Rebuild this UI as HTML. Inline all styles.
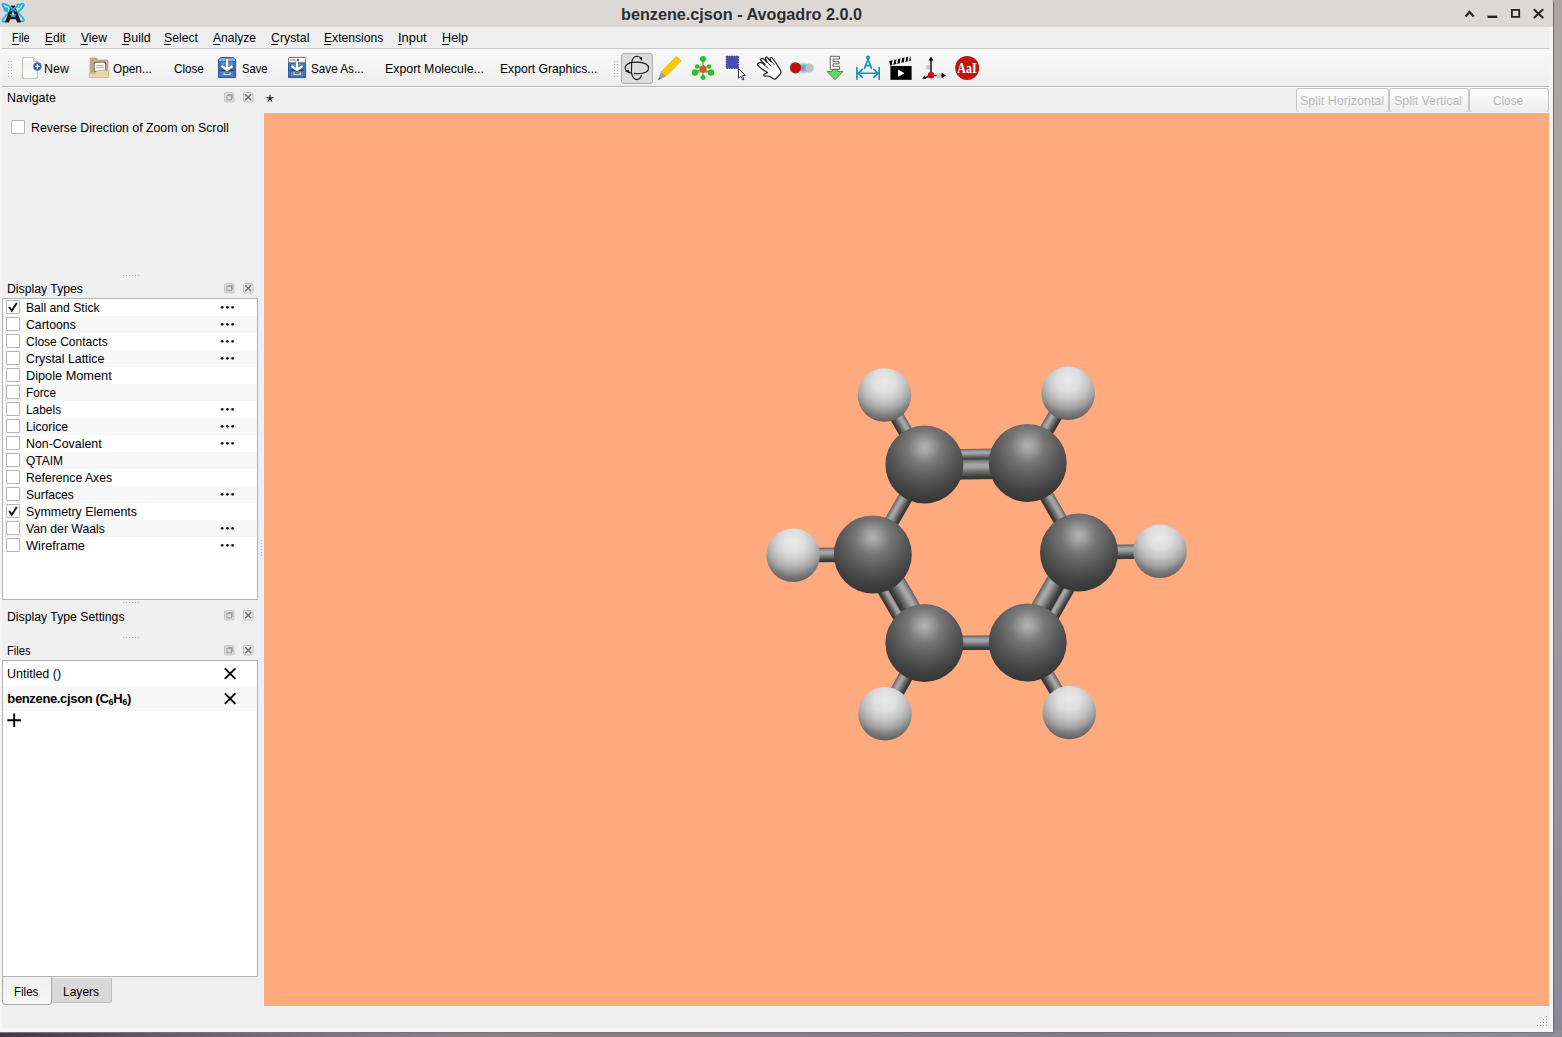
<!DOCTYPE html><html><head><meta charset="utf-8"><title>Avogadro</title><style>
*{margin:0;padding:0;box-sizing:border-box}
html,body{width:1562px;height:1037px;overflow:hidden}
body{position:relative;font-family:"Liberation Sans",sans-serif;color:#000;
 background:linear-gradient(180deg,#aca7a4 0%,#a7a2a6 40%,#9894a0 70%,#8a8798 100%)}
.a{position:absolute}
.t{position:absolute;white-space:pre}
svg{position:absolute;overflow:visible}
</style></head><body><div class="a" style="left:0;top:1031px;width:1562px;height:6px;background:linear-gradient(90deg,#3f3745 0%,#4d4553 4%,#645a68 10%,#7a7280 20%,#8a8088 30%,#857d85 50%,#7f7a84 70%,#8a8894 85%,#8e8c98 100%)"></div>
<div class="a" style="left:0;top:0;width:1554px;height:1033px;background:#f6f5f3;border-right:1px solid #6e6e6e;border-bottom:1px solid #77747a;border-top-right-radius:2px"></div>
<div class="a" style="left:0;top:0;width:1553px;height:27px;background:#dcd8d5;border-top-right-radius:2px"></div>
<div class="a" style="left:2px;top:27px;width:1547px;height:1001px;background:#efefef"></div>
<div class="a" style="left:2px;top:48px;width:1547px;height:1px;background:#c9c9c9"></div>
<div class="a" style="left:2px;top:49px;width:1547px;height:37px;background:linear-gradient(180deg,#f8f8f8 0%,#f3f3f3 60%,#ededed 100%)"></div>
<div class="a" style="left:2px;top:86px;width:1547px;height:1px;background:#b9b9b9"></div>
<div class="a" style="left:2px;top:87px;width:1547px;height:1px;background:#f7f7f7"></div>
<div class="t" style="left:620.60px;top:6px;font-size:16px;line-height:17.000px;transform:scaleX(1.0126);transform-origin:0.00px 0;font-weight:bold;color:#2b2f33;">benzene.cjson - Avogadro 2.0.0</div>
<svg style="left:1460px;top:5px" width="90" height="18" viewBox="1460 5 90 18">
<path d="M1465.5 16.5 L1469.6 12 L1473.7 16.5" fill="none" stroke="#232627" stroke-width="2.2"/>
<rect x="1487.5" y="15.6" width="9.8" height="2.4" fill="#232627"/>
<rect x="1511.9" y="9.9" width="7.3" height="7" fill="none" stroke="#232627" stroke-width="1.8"/>
<path d="M1534.4 9.8 L1542.6 17.6 M1542.6 9.8 L1534.4 17.6" stroke="#232627" stroke-width="2.1" stroke-linecap="round"/>
</svg>
<svg style="left:0px;top:0px" width="28" height="27" viewBox="0 0 28 27">
<defs><clipPath id="lgc"><rect x="0" y="0" width="28" height="11.5"/><rect x="10" y="14" width="6" height="3"/></clipPath></defs>
<ellipse cx="13.2" cy="12.6" rx="13.6" ry="2.9" transform="rotate(38.5 13.2 12.6)" fill="none" stroke="#1ab4ea" stroke-width="1.5"/><ellipse cx="13.1" cy="12.8" rx="13.6" ry="2.9" transform="rotate(-39.5 13.1 12.8)" fill="none" stroke="#1ab4ea" stroke-width="1.5"/>
<path fill-rule="evenodd" d="M4.8 22.6 L11.2 5.6 L14.8 5.6 L21.2 22.6 L17 22.6 L15.9 19.3 L10.1 19.3 L9 22.6 Z M11.1 16.4 L14.9 16.4 L13 10.6 Z" fill="#231f20"/>
<g clip-path="url(#lgc)"><ellipse cx="13.2" cy="12.6" rx="13.6" ry="2.9" transform="rotate(38.5 13.2 12.6)" fill="none" stroke="#1ab4ea" stroke-width="1.5"/><ellipse cx="13.1" cy="12.8" rx="13.6" ry="2.9" transform="rotate(-39.5 13.1 12.8)" fill="none" stroke="#1ab4ea" stroke-width="1.5"/></g>
<circle cx="6" cy="9.6" r="2.4" fill="#1ab4ea"/>
<circle cx="18.5" cy="5.6" r="2.2" fill="#1ab4ea"/>
<circle cx="18.6" cy="5.6" r="0.9" fill="#a5e3f8"/>
</svg>
<div class="t" style="left:12.30px;top:30px;font-size:13.5px;line-height:15.000px;transform:scaleX(0.8131);transform-origin:0.00px 0;">File</div>
<div class="a" style="left:11.8px;top:44px;width:7px;height:1px;background:#111"></div>
<div class="t" style="left:45.30px;top:30px;font-size:13.5px;line-height:15.000px;transform:scaleX(0.8902);transform-origin:0.00px 0;">Edit</div>
<div class="a" style="left:44.8px;top:44px;width:7px;height:1px;background:#111"></div>
<div class="t" style="left:81.00px;top:30px;font-size:13.5px;line-height:15.000px;transform:scaleX(0.8947);transform-origin:0.00px 0;">View</div>
<div class="a" style="left:80.5px;top:44px;width:7px;height:1px;background:#111"></div>
<div class="t" style="left:122.50px;top:30px;font-size:13.5px;line-height:15.000px;transform:scaleX(0.9166);transform-origin:0.00px 0;">Build</div>
<div class="a" style="left:122.0px;top:44px;width:7px;height:1px;background:#111"></div>
<div class="t" style="left:164.00px;top:30px;font-size:13.5px;line-height:15.000px;transform:scaleX(0.9059);transform-origin:0.00px 0;">Select</div>
<div class="a" style="left:163.5px;top:44px;width:7px;height:1px;background:#111"></div>
<div class="t" style="left:213.00px;top:30px;font-size:13.5px;line-height:15.000px;transform:scaleX(0.8953);transform-origin:0.00px 0;">Analyze</div>
<div class="a" style="left:212.5px;top:44px;width:7px;height:1px;background:#111"></div>
<div class="t" style="left:271.20px;top:30px;font-size:13.5px;line-height:15.000px;transform:scaleX(0.9139);transform-origin:0.00px 0;">Crystal</div>
<div class="a" style="left:270.7px;top:44px;width:7px;height:1px;background:#111"></div>
<div class="t" style="left:324.00px;top:30px;font-size:13.5px;line-height:15.000px;transform:scaleX(0.8993);transform-origin:0.00px 0;">Extensions</div>
<div class="a" style="left:323.5px;top:44px;width:7px;height:1px;background:#111"></div>
<div class="t" style="left:398.30px;top:30px;font-size:13.5px;line-height:15.000px;transform:scaleX(0.9555);transform-origin:0.00px 0;">Input</div>
<div class="a" style="left:397.8px;top:44px;width:4px;height:1px;background:#111"></div>
<div class="t" style="left:442.00px;top:30px;font-size:13.5px;line-height:15.000px;transform:scaleX(0.9361);transform-origin:0.00px 0;">Help</div>
<div class="a" style="left:441.5px;top:44px;width:7px;height:1px;background:#111"></div>
<div class="a" style="left:8px;top:61px;width:1px;height:1px;background:#b5b5b5"></div><div class="a" style="left:11px;top:61px;width:1px;height:1px;background:#b5b5b5"></div><div class="a" style="left:8px;top:64px;width:1px;height:1px;background:#b5b5b5"></div><div class="a" style="left:11px;top:64px;width:1px;height:1px;background:#b5b5b5"></div><div class="a" style="left:8px;top:67px;width:1px;height:1px;background:#b5b5b5"></div><div class="a" style="left:11px;top:67px;width:1px;height:1px;background:#b5b5b5"></div><div class="a" style="left:8px;top:70px;width:1px;height:1px;background:#b5b5b5"></div><div class="a" style="left:11px;top:70px;width:1px;height:1px;background:#b5b5b5"></div><div class="a" style="left:8px;top:73px;width:1px;height:1px;background:#b5b5b5"></div><div class="a" style="left:11px;top:73px;width:1px;height:1px;background:#b5b5b5"></div><div class="a" style="left:8px;top:76px;width:1px;height:1px;background:#b5b5b5"></div><div class="a" style="left:11px;top:76px;width:1px;height:1px;background:#b5b5b5"></div>
<div class="a" style="left:614px;top:61px;width:1px;height:1px;background:#b5b5b5"></div><div class="a" style="left:617px;top:61px;width:1px;height:1px;background:#b5b5b5"></div><div class="a" style="left:614px;top:64px;width:1px;height:1px;background:#b5b5b5"></div><div class="a" style="left:617px;top:64px;width:1px;height:1px;background:#b5b5b5"></div><div class="a" style="left:614px;top:67px;width:1px;height:1px;background:#b5b5b5"></div><div class="a" style="left:617px;top:67px;width:1px;height:1px;background:#b5b5b5"></div><div class="a" style="left:614px;top:70px;width:1px;height:1px;background:#b5b5b5"></div><div class="a" style="left:617px;top:70px;width:1px;height:1px;background:#b5b5b5"></div><div class="a" style="left:614px;top:73px;width:1px;height:1px;background:#b5b5b5"></div><div class="a" style="left:617px;top:73px;width:1px;height:1px;background:#b5b5b5"></div><div class="a" style="left:614px;top:76px;width:1px;height:1px;background:#b5b5b5"></div><div class="a" style="left:617px;top:76px;width:1px;height:1px;background:#b5b5b5"></div>
<svg style="left:20px;top:55px" width="22" height="26" viewBox="20 55 22 26">
<defs><linearGradient id="pg" x1="0" y1="0" x2="0" y2="1"><stop offset="0" stop-color="#ffffff"/><stop offset="0.3" stop-color="#f4f4f0"/><stop offset="1" stop-color="#ffffff"/></linearGradient></defs>
<path d="M22.6 57.6 L33.6 57.6 L37.3 61.3 L37.3 78.3 L22.6 78.3 Z" fill="url(#pg)" stroke="#c2c2b8" stroke-width="1"/>
<path d="M33.4 57.8 L33.4 61.5 L37.1 61.5" fill="#e8e8e4" stroke="#b8b8ae" stroke-width="0.8"/>
<circle cx="37.4" cy="66.4" r="4" fill="#2859a8" stroke="#5a86c6" stroke-width="0.7"/>
<path d="M37.4 64 V68.8 M35 66.4 H39.8" stroke="#fff" stroke-width="1.3"/>
</svg>
<div class="t" style="left:44.20px;top:61px;font-size:13.5px;line-height:15.000px;transform:scaleX(0.9211);transform-origin:0.00px 0;">New</div>
<svg style="left:86px;top:55px" width="26" height="26" viewBox="86 55 26 26">
<path d="M90 59.2 Q90 58 91.2 58 L96.6 58 L98.2 60 L106.8 60 Q108 60 108 61.2 L108 74 L90 74 Z" fill="#c4ab82" stroke="#b49a6e" stroke-width="0.6"/>
<rect x="94.2" y="62.2" width="11.4" height="9.4" fill="#ffffff" stroke="#6e6e6e" stroke-width="1"/>
<path d="M96.2 65.4 H103.6 M96.2 67.5 H103.6" stroke="#9aa09a" stroke-width="0.9"/>
<path d="M89.3 73.2 L95.4 73.2 L97 70.3 L108.6 70.3 L108.6 76.6 Q108.6 77.6 107.6 77.6 L90.3 77.6 Q89.3 77.6 89.3 76.6 Z" fill="#e8d4b0" stroke="#c9ad7e" stroke-width="0.8"/>
</svg>
<div class="t" style="left:113.30px;top:61px;font-size:13.5px;line-height:15.000px;transform:scaleX(0.8762);transform-origin:0.00px 0;">Open...</div>
<div class="t" style="left:173.50px;top:61px;font-size:13.5px;line-height:15.000px;transform:scaleX(0.8631);transform-origin:0.00px 0;">Close</div>
<svg style="left:215.9px;top:55px" width="24" height="26" viewBox="215.9 55 24 26">
<path d="M218.4 59.6 L220.5 57.5 L233.4 57.5 L235.5 59.6 L235.5 77.6 L218.4 77.6 Z" fill="#3f73c4" stroke="#2a5aa6" stroke-width="1"/><rect x="219.1" y="58.2" width="15.7" height="2.8" fill="#8db1e4"/>
<rect x="220.3" y="61.6" width="13.3" height="8.399999999999999" fill="#5a8bd6" stroke="#3a68b5" stroke-width="0.7"/>
<rect x="220.3" y="71.2" width="13.3" height="5.6" fill="#5a8bd6" stroke="#3a68b5" stroke-width="0.7"/>
<rect x="220.5" y="69.4" width="12.9" height="1.4" fill="#2b3850"/>
<path d="M226.95000000000002 60 V68.6 M222.20000000000002 66.6 L226.95000000000002 69.9 L231.70000000000002 66.6" fill="none" stroke="#3a3a3a" stroke-width="3.4" stroke-linecap="round" stroke-linejoin="round" opacity="0.55"/>
<path d="M226.95000000000002 60 V68.6 M222.20000000000002 66.6 L226.95000000000002 69.9 L231.70000000000002 66.6" fill="none" stroke="#fff" stroke-width="2.4" stroke-linecap="round" stroke-linejoin="round"/>
<path d="M223.9 72.3 V74.8 H230.0 V72.3" fill="none" stroke="#444" stroke-width="2.2" stroke-linejoin="round"/>
<path d="M223.9 72.3 V74.8 H230.0 V72.3" fill="none" stroke="#fff" stroke-width="1.1"/>
</svg>
<div class="t" style="left:241.50px;top:61px;font-size:13.5px;line-height:15.000px;transform:scaleX(0.8285);transform-origin:0.00px 0;">Save</div>
<svg style="left:286.3px;top:55px" width="24" height="26" viewBox="286.3 55 24 26">
<path d="M288.8 62.5 L305.90000000000003 62.5 L305.90000000000003 77.6 L288.8 77.6 Z" fill="#3f73c4" stroke="#2a5aa6" stroke-width="1"/><rect x="288.90000000000003" y="57.4" width="17" height="5.4" rx="1.2" fill="#fff" stroke="#6a6a6a" stroke-width="1"/><rect x="290.5" y="59.2" width="5.6" height="1.7" fill="#b4b4b4"/><rect x="297.6" y="58.8" width="1.3" height="2.3" fill="#111"/>
<rect x="290.7" y="63.4" width="13.3" height="6.6" fill="#5a8bd6" stroke="#3a68b5" stroke-width="0.7"/>
<rect x="290.7" y="71.2" width="13.3" height="5.6" fill="#5a8bd6" stroke="#3a68b5" stroke-width="0.7"/>
<rect x="290.90000000000003" y="69.4" width="12.9" height="1.4" fill="#2b3850"/>
<path d="M297.35 62.3 V68.6 M292.6 66.6 L297.35 69.9 L302.1 66.6" fill="none" stroke="#3a3a3a" stroke-width="3.4" stroke-linecap="round" stroke-linejoin="round" opacity="0.55"/>
<path d="M297.35 62.3 V68.6 M292.6 66.6 L297.35 69.9 L302.1 66.6" fill="none" stroke="#fff" stroke-width="2.4" stroke-linecap="round" stroke-linejoin="round"/>
<path d="M294.3 72.3 V74.8 H300.40000000000003 V72.3" fill="none" stroke="#444" stroke-width="2.2" stroke-linejoin="round"/>
<path d="M294.3 72.3 V74.8 H300.40000000000003 V72.3" fill="none" stroke="#fff" stroke-width="1.1"/>
</svg>
<div class="t" style="left:311.30px;top:61px;font-size:13.5px;line-height:15.000px;transform:scaleX(0.8670);transform-origin:0.00px 0;">Save As...</div>
<div class="t" style="left:385.40px;top:61px;font-size:13.5px;line-height:15.000px;transform:scaleX(0.9145);transform-origin:0.00px 0;">Export Molecule...</div>
<div class="t" style="left:499.60px;top:61px;font-size:13.5px;line-height:15.000px;transform:scaleX(0.9016);transform-origin:0.00px 0;">Export Graphics...</div>
<div class="a" style="left:621px;top:53px;width:32px;height:31px;background:#dcdcdc;border:1px solid #acacac;border-radius:3px"></div>
<svg style="left:621px;top:53px" width="32" height="31" viewBox="621 53 32 31">
<path d="M631.6 62.4 C633.5 62.1 635.5 62.1 637.5 62.1 C644 62.1 648.6 64.8 648.6 68 C648.6 71.3 644.5 73.6 638 73.7 C636.6 73.7 635.2 73.6 634 73.4 M631.3 73.1 C627.8 72.2 625.2 70.3 625.2 68 C625.2 65.6 627.6 63.5 631.6 62.4" fill="none" stroke="#1a1a1a" stroke-width="1.15"/>
<path d="M641 58.6 C640 56.8 638.6 56.2 637 56.2 C634.2 56.3 632.2 59.5 631.6 62.4 L631.5 73.2 C632.2 76.6 634.2 79.6 637 79.6 C639 79.6 640.6 77.6 641.6 75.3" fill="none" stroke="#1a1a1a" stroke-width="1.15"/>
<path d="M639.3 58.2 L642.2 56.8 L642 60.8 Z" fill="#000"/>
<path d="M625.2 71.3 L628.8 69.6 L629.8 73.2 Z" fill="#000"/>
</svg>
<svg style="left:656px;top:54px" width="28" height="28" viewBox="656 54 28 28">
<path d="M676.6 56.2 L681.4 61 L665.8 76.6 L661 71.8 Z" fill="#f6c800" stroke="#e0b000" stroke-width="0.5"/>
<path d="M661 71.8 L665.8 76.6 L658.2 80 Z" fill="#9d9d9d"/>
<path d="M658.2 80 L659.4 77.4 L660.8 78.8 Z" fill="#555"/>
</svg>
<svg style="left:689px;top:54px" width="28" height="28" viewBox="689 54 28 28">
<path d="M703 59 V78 M695 72 L711 72 M697 66 L709 72 M709 66 L695 72" stroke="#7a8a30" stroke-width="1.2"/>
<circle cx="703" cy="59" r="3" fill="#22c61e"/>
<circle cx="703" cy="77.5" r="2.5" fill="#22c61e"/>
<circle cx="695" cy="72.5" r="3.2" fill="#22c61e"/>
<circle cx="711" cy="72.5" r="3.2" fill="#22c61e"/>
<circle cx="697" cy="66.5" r="2.2" fill="#22c61e"/>
<circle cx="709" cy="66.5" r="2.2" fill="#22c61e"/>
<circle cx="703" cy="69" r="3.6" fill="#de5a26"/>
</svg>
<svg style="left:723px;top:54px" width="26" height="28" viewBox="723 54 26 28">
<rect x="726.3" y="56.2" width="12.2" height="12.2" fill="#4b4bb9" stroke="#222" stroke-width="0.8" stroke-dasharray="1.5 1"/>
<path d="M738.5 68.5 L738.5 78.2 L740.8 76.2 L742.6 80 L744 79.3 L742.3 75.6 L745.4 75.4 Z" fill="#fff" stroke="#222" stroke-width="0.9" stroke-linejoin="round"/>
</svg>
<svg style="left:754px;top:54px" width="30" height="28" viewBox="754 54 30 28">
<path d="M758 63.5 C760 62 763 63 765 64.5 L761 60.5 C760 59 761.5 57.8 763 58.6 L767 62 L765.5 58.8 C765 57.3 766.6 56.6 767.6 57.6 L771 61.8 L770.3 59 C770 57.6 771.6 57.2 772.4 58.2 L775.6 62.5 C777 64.5 778.8 67.5 780.6 70.5 C781.6 72 780.8 73.5 779.8 74.6 L776.6 78 C775.6 79 774 79.2 773 78.6 L770 76.6 C768.5 75.6 767 76 765.5 76.2 C763.8 76.5 763.2 74.8 764.5 74 L767.5 72.6 L762 69 C760.3 67.8 758.6 66.3 757.6 65 C757.2 64.4 757.4 63.9 758 63.5 Z" fill="#fff" stroke="#1a1a1a" stroke-width="1.2" stroke-linejoin="round"/>
<path d="M763 64 L768.5 68.5 M766.5 61.5 L771.5 66.5 M770.5 60.5 L774.5 65" fill="none" stroke="#1a1a1a" stroke-width="0.9"/>
</svg>
<svg style="left:786px;top:58px" width="30" height="20" viewBox="786 58 30 20">
<defs><radialGradient id="glw" cx="0.5" cy="0.5" r="0.5"><stop offset="0" stop-color="#2a9cc8" stop-opacity="1"/><stop offset="0.45" stop-color="#4ab8dc" stop-opacity="0.8"/><stop offset="1" stop-color="#bfe8f6" stop-opacity="0"/></radialGradient></defs>
<ellipse cx="803.5" cy="68" rx="12.5" ry="6.8" fill="url(#glw)"/>
<path d="M797 68 H809" stroke="#f07272" stroke-width="2"/>
<circle cx="809.7" cy="68" r="4.2" fill="#c2c2c2"/>
<circle cx="795.5" cy="67.8" r="5.6" fill="#bf1111"/>
</svg>
<svg style="left:824px;top:54px" width="22" height="28" viewBox="824 54 22 28">
<path d="M830.3 56.3 H839.5 V59 H833 V61.5 H839 V63.8 H833 V66.3 H839.6 V69.4 H830.3 Z" fill="#f6f6f6" stroke="#595959" stroke-width="0.9" stroke-linejoin="round"/>
<path d="M832.4 69.4 H837.6 V71.5 H843 L835 79.8 L827 71.5 H832.4 Z" fill="#62d762" stroke="#3d6b3d" stroke-width="0.7"/>
</svg>
<svg style="left:853px;top:54px" width="30" height="28" viewBox="853 54 30 28">
<g stroke="#1590b8" stroke-width="1.6" fill="none" stroke-linecap="round">
<path d="M856.9 67.6 V79.2 M879.2 67.6 V79.2"/>
<path d="M857.6 73.3 H878.4"/>
<path d="M862.4 69.4 L858.2 73.3 L862.4 77.3 M873.8 69.4 L878 73.3 L873.8 77.3"/>
<path d="M864.5 68.4 L868 59.3 L871.5 68.4 M865.6 65.6 H870.4"/>
<circle cx="868" cy="57.6" r="1.3"/>
</g></svg>
<svg style="left:886px;top:54px" width="28" height="28" viewBox="886 54 28 28">
<rect x="890.4" y="66" width="21.2" height="13.8" fill="#000"/>
<path d="M898 69.6 V76.8 L904.6 73.2 Z" fill="#fff"/>
<path d="M889.2 61 L910.2 56.2 L911.2 60.6 L890.2 65.4 Z" fill="#000"/>
<path d="M892.5 64.6 L893.5 59.8 M896.5 63.7 L897.5 58.9 M900.5 62.8 L901.5 58 M904.5 61.9 L905.5 57.1 M908.3 61 L909.3 56.2" stroke="#fff" stroke-width="1.6"/>
</svg>
<svg style="left:918px;top:54px" width="30" height="28" viewBox="918 54 30 28">
<circle cx="928.3" cy="67.2" r="2.5" fill="#cdcdcd"/>
<path d="M931 75 V59" stroke="#000" stroke-width="1.4"/>
<path d="M931 56.6 L933.4 60.6 L928.6 60.6 Z" fill="#000"/>
<path d="M931 75.5 L924.5 77.8 M931 75.5 L942 75.5" stroke="#000" stroke-width="1.4"/>
<circle cx="939" cy="75.5" r="2.6" fill="#c8c8c8"/>
<path d="M922.2 78.8 L924.6 75.2 L926.2 79 Z M946 75.5 L941.6 72.8 L941.6 78.2 Z" fill="#000"/>
<circle cx="931" cy="75.2" r="3.3" fill="#c21111"/>
</svg>
<svg style="left:953px;top:54px" width="28" height="28" viewBox="953 54 28 28">
<circle cx="967.2" cy="68" r="12" fill="#c11414"/>
<text x="957.3" y="72.8" font-family="Liberation Serif" font-weight="bold" font-size="13.6" fill="#fff" textLength="19.3" lengthAdjust="spacingAndGlyphs">AaI</text>
</svg>
<div class="t" style="left:6.50px;top:90px;font-size:13.5px;line-height:15.000px;transform:scaleX(0.9157);transform-origin:0.00px 0;">Navigate</div>
<svg style="left:222px;top:90px" width="34" height="14" viewBox="222 90 34 14">
<rect x="224.5" y="92.5" width="9.5" height="9.5" rx="1.5" fill="#dcdcdc" stroke="#c6c6c6" stroke-width="1"/>
<rect x="227" y="95.3" width="4.5" height="4.5" fill="none" stroke="#9a9a9a" stroke-width="1"/>
<path d="M228 94.6 H232.3 V98.8" fill="none" stroke="#9a9a9a" stroke-width="0.9"/>
<rect x="243.5" y="92.5" width="9.5" height="9.5" rx="1.5" fill="#e6e6e6" stroke="#c6c6c6" stroke-width="1"/>
<path d="M245.2 94.2 L251.2 100.3 M251.2 94.2 L245.2 100.3" stroke="#6a6a6a" stroke-width="1.25"/>
</svg>
<div class="a" style="left:11px;top:120px;width:14px;height:14px;background:#fff;border:1px solid #b5b5b5;border-radius:1px"></div>
<div class="t" style="left:30.60px;top:120px;font-size:13.5px;line-height:15.000px;transform:scaleX(0.9122);transform-origin:0.00px 0;">Reverse Direction of Zoom on Scroll</div>
<div class="a" style="left:123px;top:275px;width:1px;height:1px;background:#b8b8b8"></div><div class="a" style="left:126px;top:275px;width:1px;height:1px;background:#b8b8b8"></div><div class="a" style="left:129px;top:275px;width:1px;height:1px;background:#b8b8b8"></div><div class="a" style="left:132px;top:275px;width:1px;height:1px;background:#b8b8b8"></div><div class="a" style="left:135px;top:275px;width:1px;height:1px;background:#b8b8b8"></div><div class="a" style="left:138px;top:275px;width:1px;height:1px;background:#b8b8b8"></div>
<div class="t" style="left:6.50px;top:281px;font-size:13.5px;line-height:15.000px;transform:scaleX(0.9069);transform-origin:0.00px 0;">Display Types</div>
<svg style="left:222px;top:281px" width="34" height="14" viewBox="222 281 34 14">
<rect x="224.5" y="283.5" width="9.5" height="9.5" rx="1.5" fill="#dcdcdc" stroke="#c6c6c6" stroke-width="1"/>
<rect x="227" y="286.3" width="4.5" height="4.5" fill="none" stroke="#9a9a9a" stroke-width="1"/>
<path d="M228 285.6 H232.3 V289.8" fill="none" stroke="#9a9a9a" stroke-width="0.9"/>
<rect x="243.5" y="283.5" width="9.5" height="9.5" rx="1.5" fill="#e6e6e6" stroke="#c6c6c6" stroke-width="1"/>
<path d="M245.2 285.2 L251.2 291.3 M251.2 285.2 L245.2 291.3" stroke="#6a6a6a" stroke-width="1.25"/>
</svg>
<div class="a" style="left:2px;top:298px;width:256px;height:302px;background:#fff;border:1px solid #b4b4b4"></div>
<div class="a" style="left:6px;top:300px;width:14px;height:14px;background:#fff;border:1px solid #b5b5b5;border-radius:1px"></div>
<svg style="left:6px;top:300px" width="14" height="14" viewBox="0 0 14 14"><path d="M3.2 7 L5.8 10.8 L10.8 3" fill="none" stroke="#111" stroke-width="1.9"/></svg>
<div class="t" style="left:26.30px;top:300px;font-size:13.5px;line-height:15.000px;transform:scaleX(0.8993);transform-origin:0.00px 0;">Ball and Stick</div>
<svg style="left:219px;top:304px" width="18" height="6" viewBox="219 304 18 6"><circle cx="222.2" cy="307.3" r="1.35" fill="#111"/><circle cx="227.4" cy="307.3" r="1.35" fill="#111"/><circle cx="232.6" cy="307.3" r="1.35" fill="#111"/></svg>
<div class="a" style="left:3px;top:316px;width:254px;height:17px;background:#f7f7f7"></div>
<div class="a" style="left:6px;top:317px;width:14px;height:14px;background:#fff;border:1px solid #b5b5b5;border-radius:1px"></div>
<div class="t" style="left:26.30px;top:317px;font-size:13.5px;line-height:15.000px;transform:scaleX(0.9092);transform-origin:0.00px 0;">Cartoons</div>
<svg style="left:219px;top:321px" width="18" height="6" viewBox="219 321 18 6"><circle cx="222.2" cy="324.3" r="1.35" fill="#111"/><circle cx="227.4" cy="324.3" r="1.35" fill="#111"/><circle cx="232.6" cy="324.3" r="1.35" fill="#111"/></svg>
<div class="a" style="left:6px;top:334px;width:14px;height:14px;background:#fff;border:1px solid #b5b5b5;border-radius:1px"></div>
<div class="t" style="left:26.30px;top:334px;font-size:13.5px;line-height:15.000px;transform:scaleX(0.8926);transform-origin:0.00px 0;">Close Contacts</div>
<svg style="left:219px;top:338px" width="18" height="6" viewBox="219 338 18 6"><circle cx="222.2" cy="341.3" r="1.35" fill="#111"/><circle cx="227.4" cy="341.3" r="1.35" fill="#111"/><circle cx="232.6" cy="341.3" r="1.35" fill="#111"/></svg>
<div class="a" style="left:3px;top:350px;width:254px;height:17px;background:#f7f7f7"></div>
<div class="a" style="left:6px;top:351px;width:14px;height:14px;background:#fff;border:1px solid #b5b5b5;border-radius:1px"></div>
<div class="t" style="left:26.30px;top:351px;font-size:13.5px;line-height:15.000px;transform:scaleX(0.9155);transform-origin:0.00px 0;">Crystal Lattice</div>
<svg style="left:219px;top:355px" width="18" height="6" viewBox="219 355 18 6"><circle cx="222.2" cy="358.3" r="1.35" fill="#111"/><circle cx="227.4" cy="358.3" r="1.35" fill="#111"/><circle cx="232.6" cy="358.3" r="1.35" fill="#111"/></svg>
<div class="a" style="left:6px;top:368px;width:14px;height:14px;background:#fff;border:1px solid #b5b5b5;border-radius:1px"></div>
<div class="t" style="left:26.30px;top:368px;font-size:13.5px;line-height:15.000px;transform:scaleX(0.9440);transform-origin:0.00px 0;">Dipole Moment</div>
<div class="a" style="left:3px;top:384px;width:254px;height:17px;background:#f7f7f7"></div>
<div class="a" style="left:6px;top:385px;width:14px;height:14px;background:#fff;border:1px solid #b5b5b5;border-radius:1px"></div>
<div class="t" style="left:26.30px;top:385px;font-size:13.5px;line-height:15.000px;transform:scaleX(0.8669);transform-origin:0.00px 0;">Force</div>
<div class="a" style="left:6px;top:402px;width:14px;height:14px;background:#fff;border:1px solid #b5b5b5;border-radius:1px"></div>
<div class="t" style="left:26.30px;top:402px;font-size:13.5px;line-height:15.000px;transform:scaleX(0.8821);transform-origin:0.00px 0;">Labels</div>
<svg style="left:219px;top:406px" width="18" height="6" viewBox="219 406 18 6"><circle cx="222.2" cy="409.3" r="1.35" fill="#111"/><circle cx="227.4" cy="409.3" r="1.35" fill="#111"/><circle cx="232.6" cy="409.3" r="1.35" fill="#111"/></svg>
<div class="a" style="left:3px;top:418px;width:254px;height:17px;background:#f7f7f7"></div>
<div class="a" style="left:6px;top:419px;width:14px;height:14px;background:#fff;border:1px solid #b5b5b5;border-radius:1px"></div>
<div class="t" style="left:26.30px;top:419px;font-size:13.5px;line-height:15.000px;transform:scaleX(0.9031);transform-origin:0.00px 0;">Licorice</div>
<svg style="left:219px;top:423px" width="18" height="6" viewBox="219 423 18 6"><circle cx="222.2" cy="426.3" r="1.35" fill="#111"/><circle cx="227.4" cy="426.3" r="1.35" fill="#111"/><circle cx="232.6" cy="426.3" r="1.35" fill="#111"/></svg>
<div class="a" style="left:6px;top:436px;width:14px;height:14px;background:#fff;border:1px solid #b5b5b5;border-radius:1px"></div>
<div class="t" style="left:26.30px;top:436px;font-size:13.5px;line-height:15.000px;transform:scaleX(0.9158);transform-origin:0.00px 0;">Non-Covalent</div>
<svg style="left:219px;top:440px" width="18" height="6" viewBox="219 440 18 6"><circle cx="222.2" cy="443.3" r="1.35" fill="#111"/><circle cx="227.4" cy="443.3" r="1.35" fill="#111"/><circle cx="232.6" cy="443.3" r="1.35" fill="#111"/></svg>
<div class="a" style="left:3px;top:452px;width:254px;height:17px;background:#f7f7f7"></div>
<div class="a" style="left:6px;top:453px;width:14px;height:14px;background:#fff;border:1px solid #b5b5b5;border-radius:1px"></div>
<div class="t" style="left:26.30px;top:453px;font-size:13.5px;line-height:15.000px;transform:scaleX(0.8839);transform-origin:0.00px 0;">QTAIM</div>
<div class="a" style="left:6px;top:470px;width:14px;height:14px;background:#fff;border:1px solid #b5b5b5;border-radius:1px"></div>
<div class="t" style="left:26.30px;top:470px;font-size:13.5px;line-height:15.000px;transform:scaleX(0.9023);transform-origin:0.00px 0;">Reference Axes</div>
<div class="a" style="left:3px;top:486px;width:254px;height:17px;background:#f7f7f7"></div>
<div class="a" style="left:6px;top:487px;width:14px;height:14px;background:#fff;border:1px solid #b5b5b5;border-radius:1px"></div>
<div class="t" style="left:26.30px;top:487px;font-size:13.5px;line-height:15.000px;transform:scaleX(0.8988);transform-origin:0.00px 0;">Surfaces</div>
<svg style="left:219px;top:491px" width="18" height="6" viewBox="219 491 18 6"><circle cx="222.2" cy="494.3" r="1.35" fill="#111"/><circle cx="227.4" cy="494.3" r="1.35" fill="#111"/><circle cx="232.6" cy="494.3" r="1.35" fill="#111"/></svg>
<div class="a" style="left:6px;top:504px;width:14px;height:14px;background:#fff;border:1px solid #b5b5b5;border-radius:1px"></div>
<svg style="left:6px;top:504px" width="14" height="14" viewBox="0 0 14 14"><path d="M3.2 7 L5.8 10.8 L10.8 3" fill="none" stroke="#111" stroke-width="1.9"/></svg>
<div class="t" style="left:26.30px;top:504px;font-size:13.5px;line-height:15.000px;transform:scaleX(0.9189);transform-origin:0.00px 0;">Symmetry Elements</div>
<div class="a" style="left:3px;top:520px;width:254px;height:17px;background:#f7f7f7"></div>
<div class="a" style="left:6px;top:521px;width:14px;height:14px;background:#fff;border:1px solid #b5b5b5;border-radius:1px"></div>
<div class="t" style="left:26.30px;top:521px;font-size:13.5px;line-height:15.000px;transform:scaleX(0.9065);transform-origin:0.00px 0;">Van der Waals</div>
<svg style="left:219px;top:525px" width="18" height="6" viewBox="219 525 18 6"><circle cx="222.2" cy="528.3" r="1.35" fill="#111"/><circle cx="227.4" cy="528.3" r="1.35" fill="#111"/><circle cx="232.6" cy="528.3" r="1.35" fill="#111"/></svg>
<div class="a" style="left:6px;top:538px;width:14px;height:14px;background:#fff;border:1px solid #b5b5b5;border-radius:1px"></div>
<div class="t" style="left:26.30px;top:538px;font-size:13.5px;line-height:15.000px;transform:scaleX(0.9475);transform-origin:0.00px 0;">Wireframe</div>
<svg style="left:219px;top:542px" width="18" height="6" viewBox="219 542 18 6"><circle cx="222.2" cy="545.3" r="1.35" fill="#111"/><circle cx="227.4" cy="545.3" r="1.35" fill="#111"/><circle cx="232.6" cy="545.3" r="1.35" fill="#111"/></svg>
<div class="a" style="left:123px;top:602px;width:1px;height:1px;background:#b8b8b8"></div><div class="a" style="left:126px;top:602px;width:1px;height:1px;background:#b8b8b8"></div><div class="a" style="left:129px;top:602px;width:1px;height:1px;background:#b8b8b8"></div><div class="a" style="left:132px;top:602px;width:1px;height:1px;background:#b8b8b8"></div><div class="a" style="left:135px;top:602px;width:1px;height:1px;background:#b8b8b8"></div><div class="a" style="left:138px;top:602px;width:1px;height:1px;background:#b8b8b8"></div>
<div class="a" style="left:261px;top:540px;width:1px;height:1px;background:#b8b8b8"></div><div class="a" style="left:261px;top:543px;width:1px;height:1px;background:#b8b8b8"></div><div class="a" style="left:261px;top:546px;width:1px;height:1px;background:#b8b8b8"></div><div class="a" style="left:261px;top:549px;width:1px;height:1px;background:#b8b8b8"></div><div class="a" style="left:261px;top:552px;width:1px;height:1px;background:#b8b8b8"></div><div class="a" style="left:261px;top:555px;width:1px;height:1px;background:#b8b8b8"></div>
<div class="t" style="left:6.60px;top:609px;font-size:13.5px;line-height:15.000px;transform:scaleX(0.9069);transform-origin:0.00px 0;">Display Type Settings</div>
<svg style="left:222px;top:608px" width="34" height="14" viewBox="222 608 34 14">
<rect x="224.5" y="610.5" width="9.5" height="9.5" rx="1.5" fill="#dcdcdc" stroke="#c6c6c6" stroke-width="1"/>
<rect x="227" y="613.3" width="4.5" height="4.5" fill="none" stroke="#9a9a9a" stroke-width="1"/>
<path d="M228 612.6 H232.3 V616.8" fill="none" stroke="#9a9a9a" stroke-width="0.9"/>
<rect x="243.5" y="610.5" width="9.5" height="9.5" rx="1.5" fill="#e6e6e6" stroke="#c6c6c6" stroke-width="1"/>
<path d="M245.2 612.2 L251.2 618.3 M251.2 612.2 L245.2 618.3" stroke="#6a6a6a" stroke-width="1.25"/>
</svg>
<div class="a" style="left:123px;top:637px;width:1px;height:1px;background:#b8b8b8"></div><div class="a" style="left:126px;top:637px;width:1px;height:1px;background:#b8b8b8"></div><div class="a" style="left:129px;top:637px;width:1px;height:1px;background:#b8b8b8"></div><div class="a" style="left:132px;top:637px;width:1px;height:1px;background:#b8b8b8"></div><div class="a" style="left:135px;top:637px;width:1px;height:1px;background:#b8b8b8"></div><div class="a" style="left:138px;top:637px;width:1px;height:1px;background:#b8b8b8"></div>
<div class="t" style="left:6.60px;top:643px;font-size:13.5px;line-height:15.000px;transform:scaleX(0.8275);transform-origin:0.00px 0;">Files</div>
<svg style="left:222px;top:643px" width="34" height="14" viewBox="222 643 34 14">
<rect x="224.5" y="645.5" width="9.5" height="9.5" rx="1.5" fill="#dcdcdc" stroke="#c6c6c6" stroke-width="1"/>
<rect x="227" y="648.3" width="4.5" height="4.5" fill="none" stroke="#9a9a9a" stroke-width="1"/>
<path d="M228 647.6 H232.3 V651.8" fill="none" stroke="#9a9a9a" stroke-width="0.9"/>
<rect x="243.5" y="645.5" width="9.5" height="9.5" rx="1.5" fill="#e6e6e6" stroke="#c6c6c6" stroke-width="1"/>
<path d="M245.2 647.2 L251.2 653.3 M251.2 647.2 L245.2 653.3" stroke="#6a6a6a" stroke-width="1.25"/>
</svg>
<div class="a" style="left:2px;top:660px;width:256px;height:317px;background:#fff;border:1px solid #b4b4b4"></div>
<div class="a" style="left:3px;top:686px;width:254px;height:25px;background:#f7f7f7"></div>
<div class="t" style="left:7.30px;top:666px;font-size:13.5px;line-height:15.000px;transform:scaleX(0.9244);transform-origin:0.00px 0;">Untitled ()</div>
<div class="t" style="left:7.3px;top:692px;font-size:13px;line-height:13px;font-weight:bold;letter-spacing:-0.35px">benzene.cjson (C<span style="font-size:9px;position:relative;top:2px">6</span>H<span style="font-size:9px;position:relative;top:2px">6</span>)</div>
<svg style="left:222px;top:666px" width="16" height="15" viewBox="222 666 16 15"><path d="M224.8 668.3 L235.4 678.8 M235.4 668.3 L224.8 678.8" stroke="#000" stroke-width="1.9"/></svg>
<svg style="left:222px;top:691px" width="16" height="15" viewBox="222 691 16 15"><path d="M224.8 693.3 L235.4 703.8 M235.4 693.3 L224.8 703.8" stroke="#000" stroke-width="1.9"/></svg>
<svg style="left:6px;top:712px" width="16" height="16" viewBox="6 712 16 16"><path d="M14.2 713.6 V726.9 M7.3 720.2 H21" stroke="#000" stroke-width="1.9"/></svg>
<div class="a" style="left:51px;top:978px;width:61px;height:25px;background:#d9d9d9;border:1px solid #bdbdbd;border-top:none;border-radius:0 0 3px 3px"></div>
<div class="a" style="left:2px;top:977px;width:50px;height:28px;background:linear-gradient(180deg,#efefef,#f7f7f7);border:1px solid #a9a9a9;border-top:none;border-radius:0 0 4px 4px"></div>
<div class="t" style="left:14.10px;top:984px;font-size:13.5px;line-height:15.000px;transform:scaleX(0.8521);transform-origin:0.00px 0;">Files</div>
<div class="t" style="left:63.30px;top:984px;font-size:13.5px;line-height:15.000px;transform:scaleX(0.8906);transform-origin:0.00px 0;">Layers</div>
<svg style="left:264px;top:91px" width="12" height="12" viewBox="264 91 12 12"><path d="M270 95 V98.4 M270 98.4 L266.9 97.5 M270 98.4 L273.1 97.5 M270 98.4 L268.1 101.2 M270 98.4 L271.9 101.2" stroke="#111" stroke-width="1.15" stroke-linecap="round"/></svg>
<div class="a" style="left:1296px;top:88px;width:93px;height:25px;background:linear-gradient(180deg,#fdfdfd,#ededed);border:1px solid #c6c6c6;border-radius:3px"></div><div class="t" style="left:1300.10px;top:93px;font-size:13.5px;line-height:15.000px;transform:scaleX(0.9263);transform-origin:0.00px 0;color:#bababa;">Split Horizontal</div>
<div class="a" style="left:1389px;top:88px;width:80px;height:25px;background:linear-gradient(180deg,#fdfdfd,#ededed);border:1px solid #c6c6c6;border-radius:3px"></div><div class="t" style="left:1394.20px;top:93px;font-size:13.5px;line-height:15.000px;transform:scaleX(0.9168);transform-origin:0.00px 0;color:#bababa;">Split Vertical</div>
<div class="a" style="left:1469px;top:88px;width:80px;height:25px;background:linear-gradient(180deg,#fdfdfd,#ededed);border:1px solid #c6c6c6;border-radius:3px"></div><div class="t" style="left:1493.20px;top:93px;font-size:13.5px;line-height:15.000px;transform:scaleX(0.8718);transform-origin:0.00px 0;color:#bababa;">Close</div>
<div class="a" style="left:263px;top:112px;width:1287px;height:895px;background:#f1f3f5"></div>
<div class="a" style="left:264px;top:113px;width:1285px;height:893px;background:#ffa97e"></div>
<div class="a" style="left:1546px;top:1016px;width:2px;height:2px;background:#f8f8f8"></div><div class="a" style="left:1546px;top:1016px;width:1px;height:1px;background:#a0a0a0"></div>
<div class="a" style="left:1543px;top:1019px;width:2px;height:2px;background:#f8f8f8"></div><div class="a" style="left:1543px;top:1019px;width:1px;height:1px;background:#a0a0a0"></div>
<div class="a" style="left:1546px;top:1019px;width:2px;height:2px;background:#f8f8f8"></div><div class="a" style="left:1546px;top:1019px;width:1px;height:1px;background:#a0a0a0"></div>
<div class="a" style="left:1540px;top:1022px;width:2px;height:2px;background:#f8f8f8"></div><div class="a" style="left:1540px;top:1022px;width:1px;height:1px;background:#a0a0a0"></div>
<div class="a" style="left:1543px;top:1022px;width:2px;height:2px;background:#f8f8f8"></div><div class="a" style="left:1543px;top:1022px;width:1px;height:1px;background:#a0a0a0"></div>
<div class="a" style="left:1546px;top:1022px;width:2px;height:2px;background:#f8f8f8"></div><div class="a" style="left:1546px;top:1022px;width:1px;height:1px;background:#a0a0a0"></div>
<div class="a" style="left:1537px;top:1025px;width:2px;height:2px;background:#f8f8f8"></div><div class="a" style="left:1537px;top:1025px;width:1px;height:1px;background:#a0a0a0"></div>
<div class="a" style="left:1540px;top:1025px;width:2px;height:2px;background:#f8f8f8"></div><div class="a" style="left:1540px;top:1025px;width:1px;height:1px;background:#a0a0a0"></div>
<div class="a" style="left:1543px;top:1025px;width:2px;height:2px;background:#f8f8f8"></div><div class="a" style="left:1543px;top:1025px;width:1px;height:1px;background:#a0a0a0"></div>
<div class="a" style="left:1546px;top:1025px;width:2px;height:2px;background:#f8f8f8"></div><div class="a" style="left:1546px;top:1025px;width:1px;height:1px;background:#a0a0a0"></div>
<svg style="left:0;top:0" width="1562" height="1037" viewBox="0 0 1562 1037"><defs>
<radialGradient id="gc" cx="0.5" cy="0.28" r="0.8" fx="0.5" fy="0.28"><stop offset="0" stop-color="#b4b4b4"/><stop offset="0.1" stop-color="#a0a0a0"/><stop offset="0.28" stop-color="#767676"/><stop offset="0.5" stop-color="#5a5a5a"/><stop offset="0.75" stop-color="#404040"/><stop offset="1" stop-color="#303030"/></radialGradient>
<radialGradient id="gh" cx="0.5" cy="0.25" r="0.85" fx="0.5" fy="0.25"><stop offset="0" stop-color="#ebebeb"/><stop offset="0.25" stop-color="#dedede"/><stop offset="0.45" stop-color="#c4c4c4"/><stop offset="0.62" stop-color="#a2a2a2"/><stop offset="0.75" stop-color="#7c7c7c"/><stop offset="0.88" stop-color="#606060"/><stop offset="1" stop-color="#585858"/></radialGradient>
<linearGradient id="gb" x1="0" y1="0" x2="0" y2="1"><stop offset="0" stop-color="#575b5e"/><stop offset="0.1" stop-color="#808080"/><stop offset="0.27" stop-color="#a8a8a8"/><stop offset="0.4" stop-color="#a2a2a2"/><stop offset="0.62" stop-color="#6e6e6e"/><stop offset="0.85" stop-color="#3e3e3e"/><stop offset="1" stop-color="#333333"/></linearGradient>
</defs><rect x="-40.09" y="-7.25" width="80.19" height="14.50" fill="url(#gb)" transform="translate(904.40 429.75) rotate(60.08)"/><rect x="-40.35" y="-7.25" width="80.70" height="14.50" fill="url(#gb)" transform="translate(1047.95 428.10) rotate(-59.88)"/><rect x="-40.50" y="-7.25" width="81.01" height="14.50" fill="url(#gb)" transform="translate(1119.50 551.90) rotate(-0.85)"/><rect x="-40.71" y="-7.25" width="81.43" height="14.50" fill="url(#gb)" transform="translate(1048.50 677.50) rotate(59.28)"/><rect x="-40.47" y="-7.25" width="80.94" height="14.50" fill="url(#gb)" transform="translate(904.70 678.35) rotate(299.13)"/><rect x="-39.80" y="-7.25" width="79.60" height="14.50" fill="url(#gb)" transform="translate(833.00 554.80) rotate(359.42)"/><rect x="-51.66" y="-6.00" width="103.31" height="12.00" fill="url(#gb)" transform="translate(975.92 454.75) rotate(-0.83)"/><rect x="-51.66" y="-10.00" width="103.31" height="20.00" fill="url(#gb)" transform="translate(976.13 469.25) rotate(-0.83)"/><rect x="-51.58" y="-7.25" width="103.16" height="14.50" fill="url(#gb)" transform="translate(1053.35 507.75) rotate(60.18)"/><rect x="-51.80" y="-6.00" width="103.59" height="12.00" fill="url(#gb)" transform="translate(1061.17 601.96) rotate(299.68)"/><rect x="-51.80" y="-10.00" width="103.59" height="20.00" fill="url(#gb)" transform="translate(1048.57 594.78) rotate(299.68)"/><rect x="-51.65" y="-7.25" width="103.30" height="14.50" fill="url(#gb)" transform="translate(976.05 642.75) rotate(359.72)"/><rect x="-51.27" y="-6.00" width="102.53" height="12.00" fill="url(#gb)" transform="translate(890.82 603.23) rotate(59.78)"/><rect x="-51.27" y="-10.00" width="102.53" height="20.00" fill="url(#gb)" transform="translate(903.35 595.93) rotate(59.78)"/><rect x="-51.83" y="-7.25" width="103.66" height="14.50" fill="url(#gb)" transform="translate(898.60 509.45) rotate(-60.15)"/><circle cx="884.4" cy="395" r="26.8" fill="url(#gh)"/><circle cx="1068.2" cy="393.2" r="26.8" fill="url(#gh)"/><circle cx="1160" cy="551.3" r="26.8" fill="url(#gh)"/><circle cx="1069.3" cy="712.5" r="26.8" fill="url(#gh)"/><circle cx="885" cy="713.7" r="26.8" fill="url(#gh)"/><circle cx="793.2" cy="555.2" r="26.8" fill="url(#gh)"/><circle cx="924.4" cy="464.5" r="39" fill="url(#gc)"/><circle cx="1027.7" cy="463" r="39" fill="url(#gc)"/><circle cx="1079" cy="552.5" r="39" fill="url(#gc)"/><circle cx="1027.7" cy="642.5" r="39" fill="url(#gc)"/><circle cx="924.4" cy="643" r="39" fill="url(#gc)"/><circle cx="872.8" cy="554.4" r="39" fill="url(#gc)"/></svg></body></html>
